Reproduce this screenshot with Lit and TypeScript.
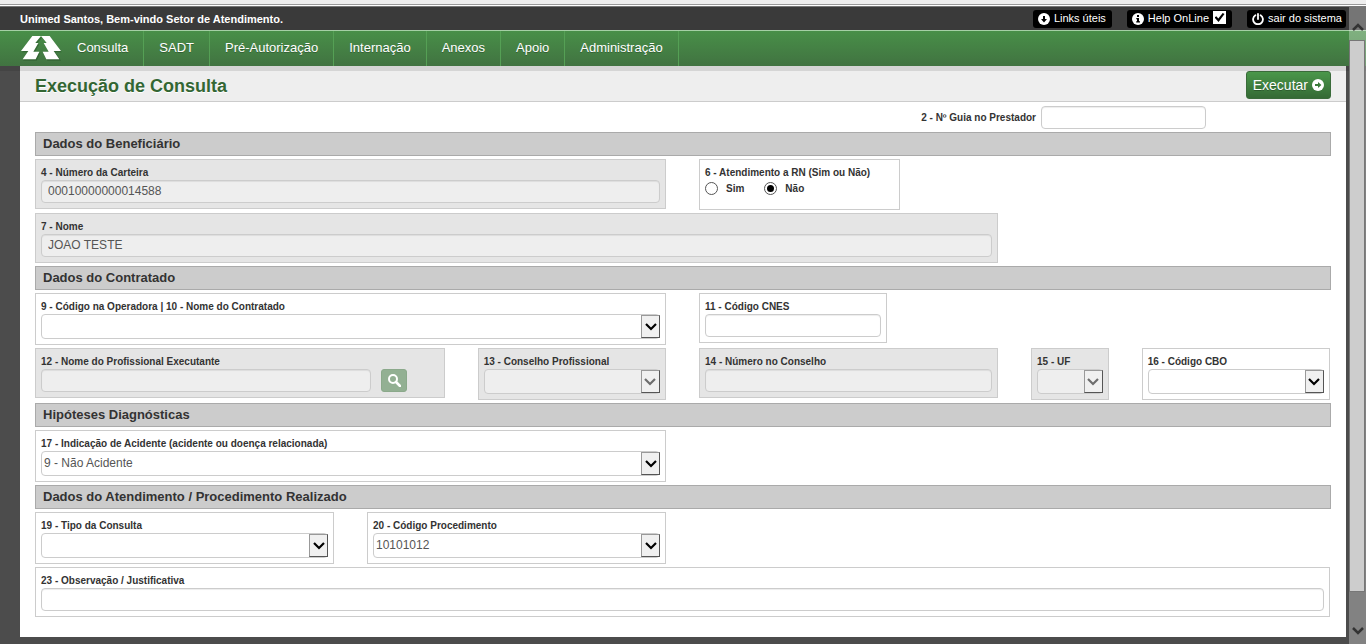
import { LitElement, html, css, svg, nothing } from "lit";
import { customElement } from "lit/decorators.js";
import { classMap } from "lit/directives/class-map.js";

interface Field {
  id: string;
  label: string;
  kind: "text" | "select" | "radio" | "search";
  span: number;
  value?: string;
  disabled?: boolean;
  options?: string[];
}

interface Section {
  title: string;
  rows: Field[][];
}

const MENU = ["Consulta", "SADT", "Pré-Autorização", "Internação", "Anexos", "Apoio", "Administração"];

const SECTIONS: Section[] = [
  {
    title: "Dados do Beneficiário",
    rows: [
      [
        { id: "carteira", label: "4 - Número da Carteira", kind: "text", span: 6, value: "00010000000014588", disabled: true },
        { id: "rn", label: "6 - Atendimento a RN (Sim ou Não)", kind: "radio", span: 3, value: "Não", options: ["Sim", "Não"] },
      ],
      [{ id: "nome", label: "7 - Nome", kind: "text", span: 9, value: "JOAO TESTE", disabled: true }],
    ],
  },
  {
    title: "Dados do Contratado",
    rows: [
      [
        { id: "contratado", label: "9 - Código na Operadora | 10 - Nome do Contratado", kind: "select", span: 6 },
        { id: "cnes", label: "11 - Código CNES", kind: "text", span: 2 },
      ],
      [
        { id: "executante", label: "12 - Nome do Profissional Executante", kind: "search", span: 4, disabled: true },
        { id: "conselho", label: "13 - Conselho Profissional", kind: "select", span: 2, disabled: true },
        { id: "numero", label: "14 - Número no Conselho", kind: "text", span: 3, disabled: true },
        { id: "uf", label: "15 - UF", kind: "select", span: 1, disabled: true },
        { id: "cbo", label: "16 - Código CBO", kind: "select", span: 2 },
      ],
    ],
  },
  {
    title: "Hipóteses Diagnósticas",
    rows: [
      [{ id: "acidente", label: "17 - Indicação de Acidente (acidente ou doença relacionada)", kind: "select", span: 6, value: "9 - Não Acidente" }],
    ],
  },
  {
    title: "Dados do Atendimento / Procedimento Realizado",
    rows: [
      [
        { id: "tipo", label: "19 - Tipo da Consulta", kind: "select", span: 3 },
        { id: "procedimento", label: "20 - Código Procedimento", kind: "select", span: 3, value: "10101012" },
      ],
      [{ id: "observacao", label: "23 - Observação / Justificativa", kind: "text", span: 12 }],
    ],
  },
];

const ring = (glyph: unknown) => html`
  <svg class="glyph" viewBox="0 0 12 12" aria-hidden="true"><circle cx="6" cy="6" r="6" fill="#fff" />${glyph}</svg>
`;

const downIcon = ring(svg`<path d="M5 3h2v3h2L6 9.400 3 6h2z" fill="#000"/>`);
const infoIcon = ring(svg`<path d="M5 2h2v2H5zM4.300 5H7v3.200h1V9.500H4.200V8.200H5V6.200H4.300z" fill="#000"/>`);
const goIcon = ring(svg`<path d="M3 5v2h3v2L9.400 6 6 3v2z" fill="#3a7a3a"/>`);
const powerIcon = html`
  <svg class="glyph" viewBox="0 0 12 12" aria-hidden="true">
    <path d="M3.400 2.200a4.900 4.900 0 1 0 5.200 0" fill="none" stroke="#fff" stroke-width="1.800" stroke-linecap="round" />
    <path d="M6 1v5" stroke="#fff" stroke-width="1.800" stroke-linecap="round" />
  </svg>
`;
const chevron = html`
  <svg class="chevron" viewBox="0 0 12 8" aria-hidden="true"><path d="M1 1l5 5 5-5" fill="none" stroke="currentColor" stroke-width="2.200" /></svg>
`;

@customElement("tiss-field")
export class TissField extends LitElement {
  static properties = { field: { attribute: false } };
  declare field: Field;

  static styles = css`
    :host { display: block; }
    .panel { box-sizing: border-box; padding: 5px; border: 1px solid #ccc; background: #fff; }
    .panel.off { background: #e5e5e5; }
    .panel.choice { width: max-content; margin: 0; padding-right: 29px; }
    .caption { display: block; padding: 0; font-size: 10px; font-weight: bold; line-height: 15px; color: #333; white-space: nowrap; }
    .box {
      display: block; box-sizing: border-box; width: 100%; min-width: 0; height: 23px; margin: 0; padding: 0 6px 1px;
      border: 1px solid #ccc; border-radius: 4px; background: #fff; box-shadow: inset 0 1px 1px rgba(0, 0, 0, 0.075);
      font: 12px/20px "Liberation Sans", Arial, sans-serif; color: #555; opacity: 1;
    }
    .box:disabled { background: #eee; }
    .pick { height: 25px; padding: 0 20px 2px 2px; appearance: none; box-shadow: none; }
    .combo { position: relative; }
    .arrow {
      position: absolute; top: 1px; right: 0; bottom: 1px; display: flex; align-items: center; justify-content: center;
      box-sizing: border-box; width: 19px; border: 1px solid #999; border-right-color: #555; border-bottom-color: #555;
      background: #f0f0f0; color: #000; pointer-events: none;
    }
    .off .arrow { color: #6d6d6d; }
    .chevron { width: 12px; height: 8px; }
    .finder { display: flex; gap: 10px; }
    .finder .box { width: 83%; }
    .find {
      display: flex; align-items: center; justify-content: center; width: 26px; height: 23px; padding: 0;
      border: 1px solid #8ba98b; border-radius: 3px; background: #93b093;
    }
    .options { display: flex; gap: 20px; height: 24px; font-size: 10px; font-weight: bold; color: #333; }
    .option { display: flex; align-items: center; gap: 8px; height: 17px; }
    .dot { display: grid; place-items: center; box-sizing: border-box; width: 13px; height: 13px; margin: 0; appearance: none; border: 1px solid #555; border-radius: 50%; background: #fff; }
    .dot:checked::before { content: ""; width: 7px; height: 7px; border-radius: 50%; background: #000; }
  `;

  private control(f: Field) {
    if (f.kind === "select") {
      return html`<div class="combo">
        <select class="box pick" id=${f.id} ?disabled=${f.disabled}><option>${f.value ?? ""}</option></select>
        <span class="arrow">${chevron}</span>
      </div>`;
    }
    const input = html`<input class="box" id=${f.id} type="text" .value=${f.value ?? ""} ?disabled=${f.disabled} />`;
    if (f.kind !== "search") return input;
    return html`<div class="finder">
      ${input}
      <button class="find" type="button" aria-label="Pesquisar" disabled>
        <svg width="13" height="13" viewBox="0 0 13 13" aria-hidden="true">
          <circle cx="5" cy="5" r="4" fill="none" stroke="#fff" stroke-width="2" />
          <path d="M8 8l4 4" stroke="#fff" stroke-width="2.500" stroke-linecap="round" />
        </svg>
      </button>
    </div>`;
  }

  render() {
    const f = this.field;
    if (!f) return nothing;
    if (f.kind === "radio") {
      return html`<div class="panel choice" role="radiogroup" aria-labelledby="caption">
        <span class="caption" id="caption">${f.label}</span>
        <div class="options">
          ${f.options?.map((o) => html`<label class="option"><input class="dot" type="radio" name=${f.id} .checked=${o === f.value} />${o}</label>`)}
        </div>
      </div>`;
    }
    return html`<div class=${classMap({ panel: true, off: !!f.disabled })}>
      <label class="caption" for=${f.id}>${f.label}</label>
      ${this.control(f)}
    </div>`;
  }
}

@customElement("app-root")
export class AppRoot extends LitElement {
  static styles = css`
    :host { display: block; position: relative; min-height: 100vh; background: #4c4c4c; font-family: "Liberation Sans", Arial, sans-serif; color: #333; }
    .edge { height: 4px; background: #eee; border-bottom: 1px solid #999; }
    .rule { height: 1px; background: #fff; border-bottom: 1px solid #777; }
    .top { display: flex; align-items: center; gap: 15px; height: 23px; padding: 0 20px; background: #3a3a3a; border-bottom: 1px solid #a5cfa5; font-size: 11px; color: #fff; }
    .welcome { margin-right: auto; font-weight: bold; }
    .pill { display: flex; align-items: center; gap: 4px; box-sizing: border-box; height: 18px; padding: 0 6px 2px 5px; border: 0; border-radius: 3px; background: #000; font: inherit; color: #fff; text-decoration: none; white-space: nowrap; }
    .pill.last { padding-right: 4px; }
    .glyph { flex: none; width: 12px; height: 12px; }
    .pill .glyph { margin-top: 2px; }
    .tick { display: grid; place-items: center; box-sizing: border-box; width: 13px; height: 13px; margin: 0; appearance: none; background: #fff; }
    .tick:checked::before { content: ""; width: 10px; height: 9px; background: #000; clip-path: polygon(0 50%, 18% 35%, 38% 62%, 82% 0, 100% 10%, 40% 100%); }
    .nav { display: flex; height: 35px; padding: 0 20px; background: linear-gradient(#488f48, #417341); box-shadow: 0 5px rgba(0, 0, 0, 0.1); position: relative; }
    .logo { width: 42px; height: 26px; margin-top: 4px; }
    .menu { display: flex; margin: 0; padding: 0; list-style: none; }
    .item { display: flex; border-right: 1px solid #55a055; }
    .link { padding: 0 15px; font-size: 13px; line-height: 34px; color: #fff; text-decoration: none; text-shadow: 0 1px rgba(0, 0, 0, 0.25); }
    .sheet { margin: 0 20px; padding-bottom: 20px; background: #fff; }
    .head { display: flex; align-items: center; justify-content: space-between; height: 35px; padding: 0 15px; background: #eee; border-bottom: 1px solid #ccc; }
    .title { margin: 0; padding-top: 4px; font-size: 18px; line-height: 22px; color: #363; text-shadow: 0 1px #fff; }
    .run { display: flex; align-items: center; gap: 4px; height: 28px; margin-top: 3px; padding: 0 6px; border: 1px solid #3a6b3a; border-radius: 3px; background: linear-gradient(#4a974a, #356a35); font: 14px "Liberation Sans", Arial, sans-serif; color: #fff; text-shadow: 0 1px rgba(0, 0, 0, 0.25); }
    .form { display: flex; flex-direction: column; gap: 3px; padding: 4px 15px 0; }
    .guide { display: flex; align-items: center; justify-content: flex-end; gap: 5px; margin-right: 125px; font-size: 10px; font-weight: bold; }
    .number { box-sizing: border-box; width: 165px; height: 23px; padding: 0 6px; border: 1px solid #ccc; border-radius: 4px; font: 12px "Liberation Sans", Arial, sans-serif; color: #555; box-shadow: inset 0 1px 1px rgba(0, 0, 0, 0.075); }
    .bar { box-sizing: border-box; height: 24px; margin: 0; padding: 0 7px; border: 1px solid #aaa; background: #ccc; font-size: 13px; line-height: 21px; }
    .row { display: grid; grid-template-columns: repeat(12, minmax(0, 1fr)); column-gap: 33px; align-items: start; padding-right: 1px; }
    .s1 { grid-column: span 1; }
    .s2 { grid-column: span 2; }
    .s3 { grid-column: span 3; }
    .s4 { grid-column: span 4; }
    .s6 { grid-column: span 6; }
    .s9 { grid-column: span 9; }
    .s12 { grid-column: span 12; }
    .scroll { position: absolute; top: 7px; right: 0; bottom: 0; z-index: 1; display: flex; flex-direction: column; width: 17px; background: rgba(255, 255, 255, 0.3); color: #333; }
    .step { display: grid; box-sizing: border-box; flex: none; place-items: center; height: 33px; padding-top: 7px; }
    .step.end { height: 52px; padding-top: 26px; }
    .thumb { flex: 1; margin: 0 1px 0 0; border: 1px solid #777; background: #cdcdcd; }
  `;

  render() {
    return html`
      <div class="edge"></div>
      <div class="rule"></div>
      <header class="top">
        <span class="welcome">Unimed Santos, Bem-vindo Setor de Atendimento.</span>
        <a class="pill" href="#links">${downIcon}Links úteis</a>
        <label class="pill">${infoIcon}Help OnLine<input class="tick" type="checkbox" checked /></label>
        <a class="pill last" href="#sair">${powerIcon}sair do sistema</a>
      </header>
      <nav class="nav">
        <svg class="logo" viewBox="0 0 126 78" aria-hidden="true">
          <path d="M40 7h52l33 45h-19l17 25H82L71 54h18L74 28h9L66 8 49 28h9L43 54h18L50 77H9l17-25H6z" fill="#234d23" opacity=".45" />
          <path d="M37 3H63L46 24h9L40 50h18L47 73H8l17-25H3z" fill="#fff" />
          <path d="M89 3H63L80 24h-9L86 50H68L79 73h39l-17-25h22z" fill="#fff" />
        </svg>
        <ul class="menu">
          ${MENU.map((m) => html`<li class="item"><a class="link" href="#menu">${m}</a></li>`)}
        </ul>
      </nav>
      <main class="sheet">
        <div class="head">
          <h1 class="title">Execução de Consulta</h1>
          <button class="run" type="button">Executar ${goIcon}</button>
        </div>
        <form class="form">
          <div class="guide"><label for="guia">2 - Nº Guia no Prestador</label><input class="number" id="guia" type="text" /></div>
          ${SECTIONS.map(
            (s) => html`<h2 class="bar">${s.title}</h2>
              ${s.rows.map((r) => html`<div class="row">${r.map((f) => html`<tiss-field class="s${f.span}" .field=${f}></tiss-field>`)}</div>`)}`
          )}
        </form>
      </main>
      <div class="scroll" aria-hidden="true">
        <span class="step"><svg width="12" height="8" viewBox="0 0 12 8"><path d="M1 7l5-5 5 5" fill="none" stroke="currentColor" stroke-width="2.500" /></svg></span>
        <span class="thumb"></span>
        <span class="step end"><svg width="12" height="8" viewBox="0 0 12 8"><path d="M1 1l5 5 5-5" fill="none" stroke="currentColor" stroke-width="2.500" /></svg></span>
      </div>
    `;
  }
}
